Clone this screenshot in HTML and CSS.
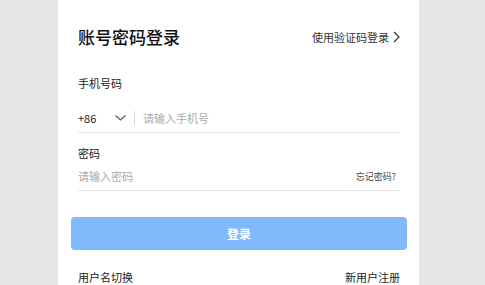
FILE: index.html
```html
<!DOCTYPE html>
<html lang="zh-CN">
<head>
<meta charset="utf-8">
<link rel="stylesheet" href="styles.css">
</head>
<body>
<div class="card">
  <div class="header">
    <h1 class="title">账号密码登录</h1>
    <a class="switch">使用验证码登录<svg class="chev-right" width="7" height="12" viewBox="0 0 7 12"><path d="M1 1 L6 6 L1 11" fill="none" stroke="#333" stroke-width="1.2"/></svg></a>
  </div>
  <div class="label">手机号码</div>
  <div class="field field-phone">
    <span class="code">+86</span>
    <svg class="chev-down" width="11" height="6" viewBox="0 0 11 6"><path d="M0.5 0.5 L5.5 5 L10.5 0.5" fill="none" stroke="#555" stroke-width="1.1"/></svg>
    <span class="sep"></span>
    <span class="placeholder">请输入手机号</span>
  </div>
  <div class="label label-pw">密码</div>
  <div class="field">
    <span class="placeholder grow">请输入密码</span>
    <a class="forgot">忘记密码?</a>
  </div>
  <button class="submit">登录</button>
  <div class="footer">
    <a>用户名切换</a>
    <a>新用户注册</a>
  </div>
</div>
</body>
</html>
```
FILE: styles.css
```css
html, body {
  margin: 0;
  padding: 0;
  background: #e6e6e6;
  height: 285px;
  overflow: hidden;
}
body {
  font-family: "Noto Sans CJK SC", "Noto Sans", sans-serif;
  color: #222;
}
.card {
  margin-left: 58px;
  width: 361px;
  height: 285px;
  box-sizing: border-box;
  padding: 0 19px 0 20px;
  background: #fff;
}
.header {
  height: 74px;
  display: flex;
  align-items: center;
  justify-content: space-between;
}
.title {
  margin: 0;
  font-size: 17px;
  font-weight: 500;
  color: #111;
  line-height: 20px;
}
.switch {
  display: flex;
  align-items: center;
  gap: 4px;
  font-size: 11px;
  color: #333;
}
.label {
  font-size: 11px;
  line-height: 18px;
  height: 18px;
  color: #222;
}
.label-pw {
  margin-top: 11px;
}
.field {
  height: 28px;
  display: flex;
  align-items: center;
  border-bottom: 1px solid #e6e6e6;
}
.field-phone {
  padding-top: 12px;
}
.code {
  font-size: 11px;
  color: #222;
  width: 37px;
}
.chev-down {
  margin-right: 8px;
}
.sep {
  width: 1px;
  height: 14px;
  background: #d8d8d8;
  margin-right: 8px;
}
.placeholder {
  font-size: 11px;
  color: #aaa;
}
.grow {
  flex: 1;
}
.forgot {
  font-size: 9px;
  color: #444;
  margin-right: 4px;
}
.submit {
  display: block;
  margin: 26px -7px 0 -7px;
  width: calc(100% + 14px);
  height: 33px;
  border: none;
  border-radius: 4px;
  background: #80bafc;
  color: #fff;
  font-family: inherit;
  font-size: 12px;
  font-weight: 700;
  padding: 0;
}
.footer {
  margin-top: 18px;
  display: flex;
  justify-content: space-between;
  font-size: 11px;
  line-height: 18px;
  color: #222;
}
```
